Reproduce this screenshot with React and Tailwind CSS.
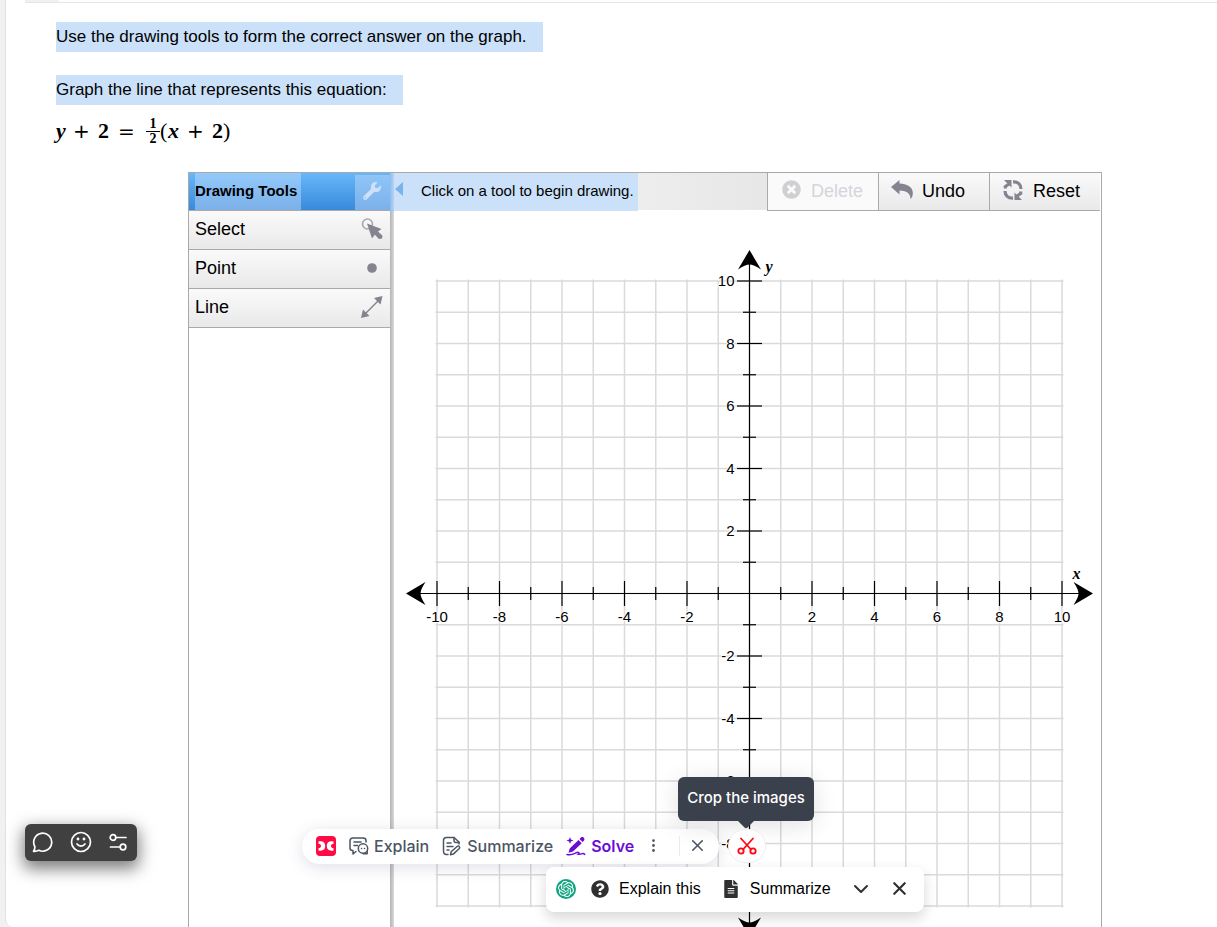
import { FaWrench, FaTimesCircle, FaFileAlt, FaQuestionCircle } from "react-icons/fa";
import { SiOpenai } from "react-icons/si";
import { ChevronDown, X, EllipsisVertical } from "lucide-react";

const UNIT = 31.25;
const ORIGIN_X = 355.5;
const ORIGIN_Y = 382.5;
const STEPS = Array.from({ length: 21 }, (_, i) => i - 10);

function SelectIcon() {
  return (
    <svg width="24" height="24" viewBox="0 0 24 24" aria-hidden="true">
      <circle cx="7.500" cy="7" r="5" fill="none" stroke="#a9a8b2" strokeWidth="1.600" />
      <path d="M7 6.500l14.500 5.500-3.500 2.500 4.500 4.200-.5 2.800-3 .5-4.200-4.300-2.800 3.800z" fill="#85838f" />
    </svg>
  );
}

function PointIcon() {
  return (
    <svg width="24" height="24" viewBox="0 0 24 24" aria-hidden="true">
      <circle cx="12" cy="12" r="4.800" fill="#85838f" />
    </svg>
  );
}

function LineIcon() {
  return (
    <svg width="24" height="24" viewBox="0 0 24 24" aria-hidden="true">
      <path d="M4 20L20 4" stroke="#85838f" strokeWidth="1.400" />
      <path d="M22.500 1l-2 8.500-6.500-6.500zM1 23l2-8.500 6.500 6.500z" fill="#85838f" />
    </svg>
  );
}

function UndoIcon() {
  return (
    <svg width="24" height="22" viewBox="0 0 24 22" aria-hidden="true">
      <path d="M1 8L9.500 1v3.500C17 4.500 22.500 8 22.800 13.500c.1 3-.6 4.700-2.300 6.700.2-4.700-3-8.700-11-8.700V15.500z" fill="#85838f" />
    </svg>
  );
}

function ResetIcon() {
  return (
    <svg width="24" height="24" viewBox="0 0 24 24" aria-hidden="true">
      <g fill="none" stroke="#85838f" strokeWidth="3.200">
        <path d="M12 3.800C17 3.500 20 6.500 20 11" />
        <path d="M12 20.200C7 20.500 4 17.500 4 13" />
        <path d="M4.300 10.500V8.500L8 6M19.700 13.500V15.500L16 18" />
      </g>
      <path d="M3 2h7.500v7.500zM21 22h-7.500v-7.500z" fill="#85838f" />
    </svg>
  );
}

function BrandIcon() {
  return (
    <svg width="20" height="20" viewBox="0 0 20 20" aria-hidden="true">
      <rect width="20" height="20" rx="4" fill="#ff0a45" />
      <path d="M2.500 5.500c4.500-.8 6.700 1 6.700 4.500s-2.200 5.300-6.700 4.500v-2.300c1.700-.2 2.500-.9 2.500-2.200s-.8-2-2.500-2.200z" fill="#fff" />
      <path d="M17.500 5.500c-4.500-.8-6.700 1-6.700 4.500s2.200 5.300 6.700 4.500v-2.300c-1.700-.2-2.500-.9-2.500-2.200s.8-2 2.500-2.200z" fill="#fff" />
    </svg>
  );
}

function ExplainIcon() {
  return (
    <svg width="20" height="20" viewBox="0 0 20 20" fill="none" stroke="#4b5563" strokeWidth="1.500" strokeLinecap="round" strokeLinejoin="round" aria-hidden="true">
      <path d="M17 6V4.500C17 2.500 16 2 14 2H4C2 2 1 3 1 5v7c0 1.500 1 2.500 2.500 2.500H4V18l3-2.500" />
      <path d="M5 6h7M5 9.500h3.500" />
      <circle cx="14" cy="12.500" r="4.700" />
      <path d="M18.200 15.500v2.200h-4M12.500 12.500h.1M15.500 12.500h.1" />
    </svg>
  );
}

function SummarizeIcon() {
  return (
    <svg width="20" height="20" viewBox="0 0 20 20" fill="none" stroke="#4b5563" strokeWidth="1.500" strokeLinecap="round" strokeLinejoin="round" aria-hidden="true">
      <path d="M17 8V6l-5-4.500H4.500C2.500 1.500 1.500 2.500 1.500 4.500v10.500c0 2 1 3.500 3 3.500H6" />
      <path d="M12 1.500v3C12 6 13 6.500 14 6.500h3M5 7h4M5 10.500h6M5 14h2" />
      <path d="M8.500 18.800l.6-3 6-5.300c1.600-1.200 3.300.6 2.200 2l-6 5.600z" />
    </svg>
  );
}

function SolveIcon() {
  return (
    <svg width="20" height="20" viewBox="0 0 20 20" fill="#6b0bd6" aria-hidden="true">
      <path d="M4 1l.9 2.600L7.500 4.500l-2.600.9L4 8l-.9-2.600L.5 4.500l2.600-.9z" />
      <path d="M12.500 4l3.200 3.200L7 15.500l-4.500 1.200 1.200-4.200zM13.500 3l1.400-1.500c2-1.500 4.500 1 3.200 3l-1.500 1.600z" />
      <path d="M1 18.500c3.500.6 7-.2 9.500-1.800 2-1.200 3.500.9 2 1.500 2.500.7 4.500-2 6.200.2" fill="none" stroke="#6b0bd6" strokeWidth="1.500" strokeLinecap="round" />
    </svg>
  );
}

function ScissorsIcon() {
  return (
    <svg width="20" height="20" viewBox="0 0 20 20" fill="none" stroke="#ff0a14" strokeWidth="1.800" strokeLinecap="round" aria-hidden="true">
      <path d="M4 2.500L14 13.500M16 2.500L6 13.500" />
      <circle cx="4" cy="15" r="2.700" />
      <circle cx="16" cy="15" r="2.700" />
    </svg>
  );
}

function ChatIcon() {
  return (
    <svg width="22" height="22" viewBox="0 0 22 22" fill="none" stroke="#fff" strokeWidth="1.700" strokeLinejoin="round" aria-hidden="true">
      <path d="M1.500 20.300c1.200-1.500 1.500-3 1.300-4.800a9 9 0 1 1 4 3.800c-1.500.8-3.300 1.200-5.300 1z" />
    </svg>
  );
}

function SmileIcon() {
  return (
    <svg width="22" height="22" viewBox="0 0 22 22" fill="none" stroke="#fff" strokeWidth="1.700" strokeLinecap="round" aria-hidden="true">
      <circle cx="11" cy="11" r="9.500" />
      <path d="M7 13c2 2.800 6 2.800 8 0" />
      <circle cx="8" cy="8" r="0.600" fill="#fff" />
      <circle cx="14" cy="8" r="0.600" fill="#fff" />
    </svg>
  );
}

function SlidersIcon() {
  return (
    <svg width="20" height="20" viewBox="0 0 20 20" fill="none" stroke="#fff" strokeWidth="1.700" strokeLinecap="round" aria-hidden="true">
      <circle cx="5" cy="5.500" r="2.800" />
      <path d="M8.500 5.500H18M2.500 15h9" />
      <circle cx="15" cy="15" r="2.800" />
    </svg>
  );
}

function Equation() {
  return (
    <div
      role="math"
      aria-label="y + 2 = 1/2 (x + 2)"
      className="flex h-[30px] items-center font-['Liberation_Serif',serif] text-[22px] leading-[30px] text-black"
    >
      <i className="w-[17px] font-bold">y</i>
      <span className="w-[25px] font-['DejaVu_Sans',sans-serif] text-[20px]">+</span>
      <span className="w-5 font-semibold">2</span>
      <span className="w-[28px] font-['DejaVu_Sans',sans-serif] text-[20px]">=</span>
      <span className="flex w-[14px] flex-col items-center text-[14px] leading-[14px] font-bold">
        <span className="w-full border-b border-black text-center">1</span>
        <span>2</span>
      </span>
      <span className="w-2">(</span>
      <i className="w-[19px] font-bold">x</i>
      <span className="w-[25px] font-['DejaVu_Sans',sans-serif] text-[20px]">+</span>
      <span className="font-semibold">2</span>
      <span>)</span>
    </div>
  );
}

function ToolRow({ label, icon }) {
  return (
    <li>
      <button
        type="button"
        className="flex h-[39px] w-full cursor-pointer items-center justify-between border-b border-[#a9a9a9] bg-linear-to-b from-[#fafafa] to-[#e9e9e9] px-1.5 pb-0.5 text-[18px] text-black"
      >
        {label}
        {icon}
      </button>
    </li>
  );
}

function ActionButton({ label, icon, disabled }) {
  return (
    <button
      type="button"
      disabled={disabled}
      className="flex h-[38px] w-[111px] cursor-pointer items-center gap-2 border-b border-l border-[#a9a9a9] bg-linear-to-b from-[#fafafa] to-[#e9e9e9] pl-[11px] text-[18px] text-black disabled:cursor-default disabled:from-[#fafafa] disabled:to-[#fafafa] disabled:text-[#d5d5dc]"
    >
      <span className="mb-1 flex w-6 justify-center">{icon}</span>
      {label}
    </button>
  );
}

function Graph() {
  const start = -10 * UNIT - 1.5;
  const end = 10 * UNIT + 1.5;

  return (
    <svg
      width="707"
      height="760"
      viewBox="0 0 707 760"
      className="mx-auto block"
      role="img"
      aria-label="Coordinate plane from -10 to 10"
    >
      <g transform={`translate(${ORIGIN_X} ${ORIGIN_Y})`}>
        <g stroke="#dadada" strokeWidth="1.500">
          {STEPS.map((n) => (
            <g key={n}>
              <line x1={n * UNIT} x2={n * UNIT} y1={start} y2={end} />
              <line x1={start} x2={end} y1={n * UNIT} y2={n * UNIT} />
            </g>
          ))}
        </g>
        <g stroke="#000" strokeWidth="1.200">
          <line x1="-335" x2="335" y1="0" y2="0" />
          <line x1="0" x2="0" y1="-335" y2="335" />
          {STEPS.filter((n) => n !== 0).map((n) => {
            const size = n % 2 === 0 ? 12.5 : 6.5;
            return (
              <g key={n}>
                <line x1={n * UNIT} x2={n * UNIT} y1={-size} y2={size} />
                <line x1={-size} x2={size} y1={n * UNIT} y2={n * UNIT} />
              </g>
            );
          })}
        </g>
        {[0, 90, 180, 270].map((angle) => (
          <path key={angle} d="M343.500 0L324-11.500Q329-4 329 0T324 11.500z" transform={`rotate(${angle})`} />
        ))}
        <g
          className="font-['Liberation_Sans',sans-serif] text-[15px]"
          stroke="#fff"
          strokeWidth="2"
          paintOrder="stroke"
        >
          {STEPS.filter((n) => n !== 0 && n % 2 === 0).map((n) => (
            <g key={n}>
              <text x={n * UNIT} y="28" textAnchor="middle">{n}</text>
              <text x="-15" y={-n * UNIT + 5} textAnchor="end">{n}</text>
            </g>
          ))}
        </g>
        <g className="font-['Liberation_Serif',serif] text-[16px] font-bold italic">
          <text x="16" y="-322">y</text>
          <text x="323" y="-15">x</text>
        </g>
      </g>
    </svg>
  );
}

function DrawingWidget() {
  return (
    <section className="mt-[26px] mr-[115px] ml-[182px] flex min-w-[914px] border-t border-r border-l border-[#a9a9a9]">
      <aside className="w-[201px] shrink-0">
        <div className="flex h-[38px] items-stretch border-b border-[#a9a9a9] bg-linear-to-b from-[#67b7fb] to-[#388ada] pl-1.5">
          <h2 className="w-[106px] bg-linear-to-b from-[#93c9fa] to-[#7bb0e9] text-[15px] leading-9 font-bold text-black">
            Drawing Tools
          </h2>
          <button
            type="button"
            aria-label="Toggle drawing tools"
            className="mt-0.5 ml-auto flex w-[35px] items-center bg-linear-to-b from-[#8fc6f9] to-[#7bb0e9] pb-1 pl-2 text-[#cde2fa]"
          >
            <FaWrench size={18} />
          </button>
        </div>
        <ul>
          <ToolRow label="Select" icon={<SelectIcon />} />
          <ToolRow label="Point" icon={<PointIcon />} />
          <ToolRow label="Line" icon={<LineIcon />} />
        </ul>
      </aside>

      <div className="w-1 shrink-0 bg-linear-to-r from-[#b4b4b4] to-[#d9d9d9]">
        <div className="h-[39px] bg-linear-to-r from-[#8fbcec] to-[#b5d4f5]" />
      </div>

      <div className="min-w-0 flex-1">
        <div className="flex h-[38px]">
          <p className="flex items-center gap-[18px] bg-[#cbe1f9] pr-1 pb-0.5 pl-px text-[15px] text-black">
            <svg width="8" height="16" viewBox="0 0 8 16" className="mb-1" aria-hidden="true">
              <path d="M8 1v14L0 8z" fill="#7ab3ec" />
            </svg>
            Click on a tool to begin drawing.
          </p>
          <div className="h-[37px] flex-1 bg-linear-to-r from-[#ededed] to-[#e7e7e7]" />
          <div className="mr-px flex">
            <ActionButton label="Delete" icon={<FaTimesCircle size={19} color="#d0d0d3" />} disabled />
            <ActionButton label="Undo" icon={<UndoIcon />} />
            <ActionButton label="Reset" icon={<ResetIcon />} />
          </div>
        </div>
        <Graph />
      </div>
    </section>
  );
}

function FeedbackBar() {
  return (
    <div className="absolute top-[824px] left-[25px] flex h-[37px] w-[112px] items-center justify-between rounded-md bg-[#404040] pr-[9px] pb-px pl-[7px] shadow-[0_6px_16px_2px_rgba(0,0,0,0.5)]">
      <button type="button" aria-label="Comment"><ChatIcon /></button>
      <button type="button" aria-label="React"><SmileIcon /></button>
      <button type="button" aria-label="Settings"><SlidersIcon /></button>
    </div>
  );
}

function HelperBar() {
  return (
    <div className="absolute top-[829px] left-[302px] flex h-[35px] w-[417px] items-center rounded-full bg-white pb-0.5 pl-3.5 font-['Inter',sans-serif] text-[16px] font-medium text-[#4b5563] shadow-[0_3px_16px_rgba(80,80,130,0.18)]">
      <BrandIcon />
      <button type="button" className="ml-[13px] flex items-center gap-[5px]">
        <ExplainIcon />
        Explain
      </button>
      <button type="button" className="ml-[13px] flex items-center gap-[5px]">
        <SummarizeIcon />
        Summarize
      </button>
      <button type="button" className="ml-[13px] flex items-center gap-[5px] font-semibold text-[#6b0bd6]">
        <SolveIcon />
        Solve
      </button>
      <button type="button" aria-label="More" className="ml-[11px]">
        <EllipsisVertical size={17} />
      </button>
      <span className="ml-auto h-5 w-px bg-[#eaeaef]" />
      <button type="button" aria-label="Close helper" className="mr-3 ml-2">
        <X size={19} />
      </button>
    </div>
  );
}

function CropButton() {
  return (
    <div className="absolute top-[777px] left-[678px] flex w-[136px] flex-col items-center font-['Inter',sans-serif]">
      <div
        role="tooltip"
        className="flex h-11 w-full items-center justify-center rounded-md bg-[#3a404c] pb-0.5 text-[15px] font-medium whitespace-nowrap text-white shadow-[0_4px_24px_rgba(0,0,0,0.12)]"
      >
        Crop the images
      </div>
      <svg width="16" height="8" viewBox="0 0 16 8" aria-hidden="true">
        <path d="M0 0h16L9.500 6.500q-1.500 1.500-3 0z" fill="#3a404c" />
      </svg>
      <button
        type="button"
        aria-label="Crop the images"
        className="ml-0.5 flex h-[34px] w-[38px] items-center justify-center rounded-full border border-[#eeeeee] bg-white"
      >
        <ScissorsIcon />
      </button>
    </div>
  );
}

function AssistantBar() {
  return (
    <div className="absolute top-[867px] left-[546px] flex h-[45px] w-[378px] items-center rounded-lg bg-white pb-0.5 pl-2.5 text-[16px] text-black shadow-[0_6px_14px_rgba(0,0,0,0.16)]">
      <span className="flex size-5 items-center justify-center rounded-full bg-[#12a37f] text-white">
        <SiOpenai size={16} />
      </span>
      <button type="button" className="ml-[15px] flex items-center gap-2.5">
        <FaQuestionCircle size={18} color="#303030" />
        Explain this
      </button>
      <button type="button" className="ml-[21px] flex items-center gap-2.5">
        <FaFileAlt size={18} color="#303030" />
        Summarize
      </button>
      <button type="button" aria-label="More options" className="ml-[18px]">
        <ChevronDown size={24} color="#303030" />
      </button>
      <button type="button" aria-label="Close assistant" className="mr-3.5 ml-auto">
        <X size={21} strokeWidth={2.5} color="#303030" />
      </button>
    </div>
  );
}

export default function App() {
  return (
    <div className="relative h-screen overflow-hidden bg-[#f1f1f1] pl-[5px] font-['Liberation_Sans',sans-serif]">
      <main className="h-full overflow-hidden rounded-bl-lg border-l border-[#e2e2e2] bg-white">
        <div className="ml-[19px] h-[3px] border-b border-[#e5e5e5]">
          <div className="h-0.5 w-[34px] bg-[#f1f1f1]" />
        </div>
        <div className="mt-[19px] ml-[50px] flex flex-col items-start text-[17px] leading-[30px] text-black">
          <p className="mb-[23px] bg-[#cbe1f9] pr-4">Use the drawing tools to form the correct answer on the graph.</p>
          <p className="mb-[11px] bg-[#cbe1f9] pr-4">Graph the line that represents this equation:</p>
          <Equation />
        </div>
        <DrawingWidget />
      </main>

      <FeedbackBar />
      <HelperBar />
      <CropButton />
      <AssistantBar />
    </div>
  );
}
